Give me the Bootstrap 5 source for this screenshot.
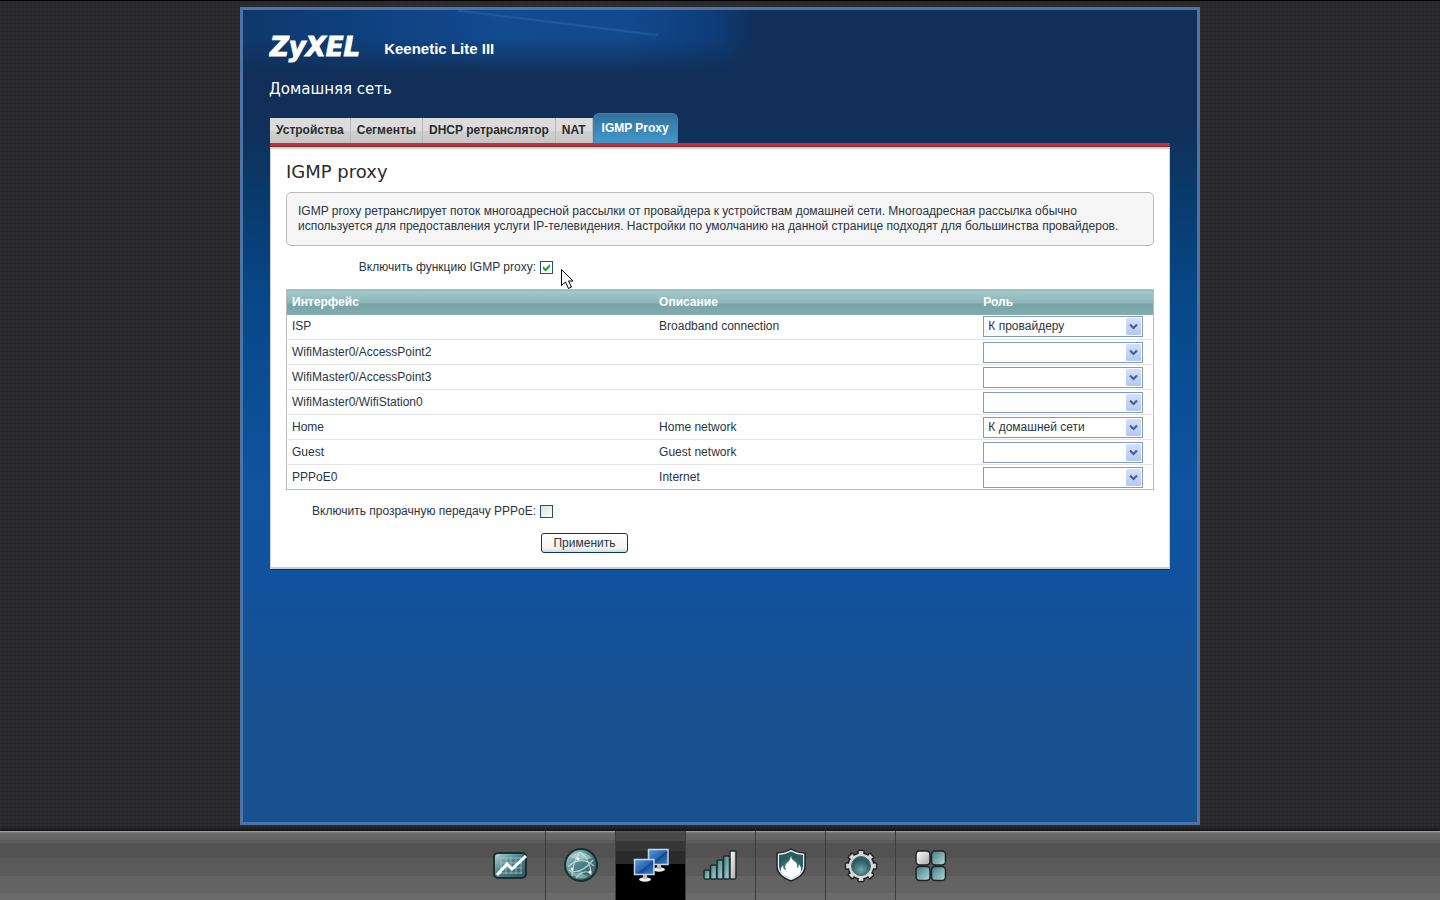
<!DOCTYPE html>
<html lang="ru">
<head>
<meta charset="utf-8">
<meta name="viewport" content="width=device-width, initial-scale=1">
<title>ZyXEL Keenetic Lite III</title>
<link href="https://cdn.jsdelivr.net/npm/bootstrap@5.3.0/dist/css/bootstrap.min.css" rel="stylesheet">
<style>
body{font:12px/15px "Liberation Sans",Arial,sans-serif;color:#2a3442;border-top:1px solid #000;
 background:repeating-linear-gradient(0deg,#00000018 0 1px,#0000 1px 4px),repeating-linear-gradient(90deg,#2d2d2f 0 2px,#29292b 2px 4px)}
.frame{width:100%;max-width:960px;border:3px solid #4e73a6;margin:6px auto;padding:0 27px 16px;
 background:linear-gradient(180deg,#112f58 0,#112f58 110px,#0a3867 170px,#08417b 240px,#08498b 300px,#10539f 480px,#10529e 560px,#185190 700px,#185190 100%)}
.glow{margin:0 -27px;padding:25px 27px 0;height:69px;
 background:linear-gradient(7deg,#0000 58%,#7799cc33 61%,#0000 64%) 215px 0/200px 40px no-repeat,
 linear-gradient(180deg,#112f5800 40%,#112f58 92%),
 linear-gradient(90deg,#0f386b,#0e3f7c 20%,#124b90 50%,#124a8e 75%,#0e3c78 92%,#112f58) 0 0/512px 100% no-repeat}
.brand{font:italic 700 26px/24px "DejaVu Sans",Verdana,sans-serif;color:#fff;-webkit-text-stroke:1px #fff}
.model{font-size:15px;line-height:28px;color:#fff;font-weight:700;margin-left:24px}
.section-name{font:15px/20px "DejaVu Sans",Verdana,sans-serif;color:#fff;margin:0 0 14px -1px}
.tabs{min-height:30px}
.tabs .nav-link{font-weight:700;color:#2b2b2b;padding:5px 6px;line-height:15px;height:25px;border-right:1px solid #b8b8b8;border-radius:0;background:linear-gradient(#dcdcdc 0 50%,#d0d0d0 51%,#c6c6c6)}
.tabs .nav-link.active{height:30px;color:#fff;padding:7px 8px;border:1px solid #3d86b5;border-bottom:0;border-radius:6px 6px 0 0;background:linear-gradient(#34719c,#4298cb)}
.panel{background:#fff;border-top:3px solid #cb2e30;padding:15px 16px 16px;box-shadow:inset 0 1px 0 #6b3438,inset 0 3px 2px #ccc,inset -1px 0 #ccd5df,inset 1px 0 #ccd5df,inset 0 -2px 1px #ccc,0 1px #0a2f60}
.panel h1{font:18px/22px "DejaVu Sans",Verdana,sans-serif;margin:0 0 9px;color:#2b2b2b}
.note{border:1px solid #bbb;border-radius:5px;background:#f6f6f6;padding:11px}
.field{margin:14px 0}
.field-name{width:250px;text-align:right}
.tick.form-check-input{width:13px;height:13px;margin:0;border:1px solid #1c5180;border-radius:0;background-color:#fff;background-image:linear-gradient(135deg,#dcdcd7,#fff);flex:none}
.tick.form-check-input:checked{background-image:url("data:image/svg+xml,%3Csvg xmlns='http://www.w3.org/2000/svg' viewBox='0 0 11 11'%3E%3Cpath d='M2 4v3l2.5 2.500L9 5V2L4.500 6.500z' fill='%2321a121'/%3E%3C/svg%3E")}
.pointer{position:absolute;left:275px;top:9px}
.ifaces{border:1px solid #bbb;table-layout:fixed;margin:0;color:inherit}
.ifaces th{height:25px;padding:0 5px;color:#fff;background:linear-gradient(#a5c9cb 0,#8bb5b7 50%,#76a3a5 52%,#82adb0);border:0;vertical-align:middle}
.ifaces td{height:25px;padding:0 5px;border:0;border-bottom:1px solid #e4e4e4;vertical-align:middle}
.ifaces tr:last-child td{border-bottom:0}
.ifaces .w-name{width:42.4%}.ifaces .w-desc{width:37.4%}
.role.form-select{width:160px;height:21px;padding:0 20px 0 4px;font-size:12px;line-height:19px;color:#2a3442;border:1px solid #7f9db9;border-radius:0;background:#fff url("data:image/svg+xml,%3Csvg xmlns='http://www.w3.org/2000/svg' viewBox='0 0 15 17'%3E%3ClinearGradient id='g' x2='0' y2='1'%3E%3Cstop stop-color='%23d3dffd'/%3E%3Cstop offset='1' stop-color='%23b4c8f6'/%3E%3C/linearGradient%3E%3Crect width='15' height='17' rx='1.500' fill='url(%23g)'/%3E%3Cpath d='M4 6.500 7.500 10 11 6.500' fill='none' stroke='%234d6185' stroke-width='2.200'/%3E%3C/svg%3E") right 1px center/15px 17px no-repeat}
.apply{width:87px;height:20px;padding:0;margin-left:255px;font-size:12px;line-height:19px;color:#2a3442;border:1px solid #003c74;border-radius:3px;background:linear-gradient(#fff,#f3f2ed 80%,#dcd8cc)}
.dock{height:69px;border-top:1px solid #9a9a9a;background:linear-gradient(#777 1px,#666 2px 8px,#5b5b5b 8px 11px,#525252 11px 26px,#5a5a5a 26px 44px,#636363 44px 61px,#6b6b6b 61px);box-shadow:0 -2px 3px #111}
.dock a{width:70px;border-left:1px solid #3d3d3d;margin-top:-1px}
.dock a:first-child{border-left:0}
.dock a.current{background:linear-gradient(#555 1px,#484848 2px 10px,#363636 10px 20px,#2a2a2a 20px 33px,#000 33px)}
</style>
</head>
<body class="d-flex flex-column min-vh-100">
<main class="frame flex-grow-1">
 <header class="glow d-flex"><div class="brand">ZyXEL</div><div class="model">Keenetic Lite III</div></header>
 <h2 class="section-name">Домашняя сеть</h2>
 <nav class="nav tabs align-items-end">
  <a class="nav-link" href="#">Устройства</a>
  <a class="nav-link" href="#">Сегменты</a>
  <a class="nav-link" href="#">DHCP ретранслятор</a>
  <a class="nav-link" href="#">NAT</a>
  <a class="nav-link active" href="#" aria-current="page">IGMP Proxy</a>
 </nav>
 <section class="panel">
  <h1>IGMP proxy</h1>
  <div class="note">IGMP proxy ретранслирует поток многоадресной рассылки от провайдера к устройствам домашней сети. Многоадресная рассылка обычно используется для предоставления услуги IP-телевидения. Настройки по умолчанию на данной странице подходят для большинства провайдеров.</div>
  <form>
   <div class="field d-flex align-items-center position-relative gap-1">
    <label class="field-name" for="igmp">Включить функцию IGMP proxy:</label>
    <input class="form-check-input tick" type="checkbox" id="igmp" checked>
    <svg class="pointer" width="14" height="23" viewBox="0 0 14 23" aria-hidden="true"><path d="M.5.5V16.500l4-3.500 3 6.500 3-1.500-3-6h4.500z" fill="#fff" stroke="#000"/></svg>
   </div>
   <table class="table table-sm ifaces">
    <thead><tr><th class="w-name">Интерфейс</th><th class="w-desc">Описание</th><th>Роль</th></tr></thead>
    <tbody>
     <tr><td>ISP</td><td>Broadband connection</td><td><select class="form-select role" aria-label="ISP"><option>К провайдеру</option></select></td></tr>
     <tr><td>WifiMaster0/AccessPoint2</td><td></td><td><select class="form-select role" aria-label="AccessPoint2"><option></option></select></td></tr>
     <tr><td>WifiMaster0/AccessPoint3</td><td></td><td><select class="form-select role" aria-label="AccessPoint3"><option></option></select></td></tr>
     <tr><td>WifiMaster0/WifiStation0</td><td></td><td><select class="form-select role" aria-label="WifiStation0"><option></option></select></td></tr>
     <tr><td>Home</td><td>Home network</td><td><select class="form-select role" aria-label="Home"><option>К домашней сети</option></select></td></tr>
     <tr><td>Guest</td><td>Guest network</td><td><select class="form-select role" aria-label="Guest"><option></option></select></td></tr>
     <tr><td>PPPoE0</td><td>Internet</td><td><select class="form-select role" aria-label="PPPoE0"><option></option></select></td></tr>
    </tbody>
   </table>
   <div class="field d-flex align-items-center gap-1">
    <label class="field-name" for="pppoe">Включить прозрачную передачу PPPoE:</label>
    <input class="form-check-input tick" type="checkbox" id="pppoe">
   </div>
   <button class="btn apply d-block" type="button">Применить</button>
  </form>
 </section>
</main>
<nav class="dock d-flex justify-content-center">
 <a class="d-flex align-items-center justify-content-center" href="#" aria-label="Монитор"><svg width="36" height="36" viewBox="0 0 36 36"><defs>
  <linearGradient id="teal" x2="1" y2="1"><stop stop-color="#bfdcdc"/><stop offset=".45" stop-color="#4f8488"/><stop offset="1" stop-color="#2c5459"/></linearGradient>
  <linearGradient id="mint" x2="1" y2="1"><stop stop-color="#3f7e82"/><stop offset="1" stop-color="#b5d8d8"/></linearGradient>
  <linearGradient id="silver" x2="1" y2="1"><stop stop-color="#fff"/><stop offset="1" stop-color="#a5a5a5"/></linearGradient>
  <linearGradient id="screen" x2="1" y2="1"><stop stop-color="#5a9de2"/><stop offset=".5" stop-color="#2766b2"/><stop offset=".55" stop-color="#124a94"/><stop offset="1" stop-color="#4a8ad0"/></linearGradient>
  <radialGradient id="ball" cx=".5" cy=".7"><stop stop-color="#6ea7aa"/><stop offset="1" stop-color="#2b5c60"/></radialGradient>
 </defs><rect x="2" y="5" width="32" height="25" rx="4" fill="url(#teal)" stroke="#1b2f31" stroke-width="2"/><path d="M9 9v17M14 9v17M19 9v17M24 9v17M29 9v17M8 10h22M8 15h22M8 20h22M8 25h22" stroke="#a4cdd0" opacity=".7"/><path d="m5 27 10-11 5 5L34 8" fill="none" stroke="#fff" stroke-width="3"/></svg></a>
 <a class="d-flex align-items-center justify-content-center" href="#" aria-label="Интернет"><svg width="36" height="36" viewBox="0 0 36 36"><circle cx="18" cy="17" r="16" fill="url(#teal)" stroke="#1b2f31" stroke-width="2"/><path d="M7 9q10-10 22 1-11 4-22-1z" fill="#c8e4e4" opacity=".6"/><path d="M5 19q12-12 26-1M9 28Q10 13 17 4M17 4q11 8 11 23M5 22q12 6 25-10M13 30q9-10 15-4" fill="none" stroke="#d0eeee" stroke-width="1.200" opacity=".75"/><path d="M6 21q6 7 12 2 3 6 9 4-7 6-14 2-6-2-7-8z" fill="#b8dcdc" opacity=".5"/><g fill="#fff"><circle cx="15" cy="11" r="1.500"/><circle cx="27" cy="24" r="1.500"/><circle cx="9" cy="21" r="1.500"/></g></svg></a>
 <a class="current d-flex align-items-center justify-content-center" href="#" aria-label="Домашняя сеть"><svg width="36" height="36" viewBox="0 0 36 36"><g id="pc"><ellipse cx="26" cy="21.500" rx="6" ry="2.200" fill="#eee"/><path d="M24 17h4v4h-4z" fill="#bbb"/><rect x="15.500" y="1.500" width="19.500" height="15" fill="url(#screen)" stroke="#c6d4e4" stroke-width="1.500"/></g><use href="#pc" x="-14" y="10"/></svg></a>
 <a class="d-flex align-items-center justify-content-center" href="#" aria-label="Wi-Fi"><svg width="36" height="36" viewBox="0 0 36 36"><g fill="url(#mint)" stroke="#1b2f31" stroke-width="1.500"><rect x="1" y="22" width="6" height="9" rx="1"/><rect x="7.500" y="17" width="6" height="14" rx="1"/><rect x="14" y="12" width="6" height="19" rx="1"/><rect x="20.500" y="8" width="6" height="23" rx="1"/><rect x="27" y="3" width="6" height="28" rx="1" fill="url(#silver)"/></g></svg></a>
 <a class="d-flex align-items-center justify-content-center" href="#" aria-label="Безопасность"><svg width="36" height="36" viewBox="0 0 36 36"><path d="M18 1q6 4 14 4v13q0 10-14 15Q4 28 4 18V5q8 0 14-4z" fill="#e8f2f2" stroke="#222" stroke-width="1.500"/><path d="M18 3.500q5 3 12 3.500v11q0 8-12 13Q6 26 6 18V7q7-.5 12-3.500z" fill="url(#ball)"/><path d="M18 8q-1 5-4 7-3 3-1 7-3 0-3-5-5 6 1 10l7 4 7-4q6-4 1-11 0 3-2 4 1-5-3-7-3-2-3-5z" fill="#fff"/></svg></a>
 <a class="d-flex align-items-center justify-content-center" href="#" aria-label="Система"><svg width="36" height="36" viewBox="0 0 36 36"><g fill="#d6d6d6" stroke="#222" stroke-width="1.500"><g id="teeth"><rect id="tooth" x="15" y="2.500" width="6" height="31" rx="1"/><use href="#tooth" transform="rotate(90 18 18)"/></g><use href="#teeth" transform="rotate(45 18 18)"/><circle cx="18" cy="18" r="13"/></g><g fill="#d6d6d6"><g id="core"><rect id="spoke" x="15.800" y="3.500" width="4.400" height="29"/><use href="#spoke" transform="rotate(90 18 18)"/></g><use href="#core" transform="rotate(45 18 18)"/></g><circle cx="18" cy="18" r="9.500" fill="url(#ball)" stroke="#47666a"/></svg></a>
 <a class="d-flex align-items-center justify-content-center" href="#" aria-label="Приложения"><svg width="36" height="36" viewBox="0 0 36 36"><g fill="url(#mint)" stroke="#222" stroke-width="1.500"><rect x="3" y="3" width="14" height="14" rx="3.500" fill="url(#silver)"/><rect x="18.500" y="3" width="14" height="14" rx="3.500"/><rect x="3" y="18.500" width="14" height="14" rx="3.500"/><rect x="18.500" y="18.500" width="14" height="14" rx="3.500"/></g></svg></a>
</nav>
<script src="https://cdn.jsdelivr.net/npm/bootstrap@5.3.0/dist/js/bootstrap.bundle.min.js"></script>
</body>
</html>
